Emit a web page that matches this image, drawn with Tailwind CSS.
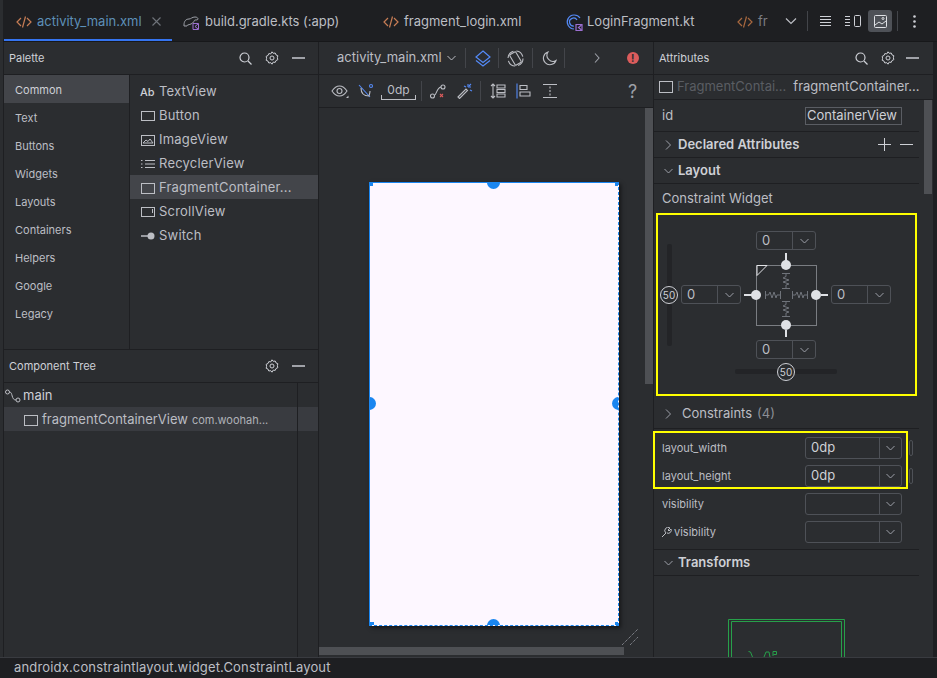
<!DOCTYPE html>
<html lang="en">
<head>
    <meta charset="UTF-8">
    <title>activity_main.xml</title>
    <script src="https://cdn.jsdelivr.net/npm/@tailwindcss/browser@4"></script>
</head>
<body class="bg-[#1e1f22]">
<div class="w-[937px] h-[678px] overflow-hidden flex flex-col bg-[#1e1f22] font-['Inter',sans-serif] text-[13px] text-[#bcbec4] relative">

    <!-- Tabs -->
    <div class="h-[42px] flex items-stretch pl-[4px] border-b border-[#17181a] shrink-0">
        <div class="w-[168px] flex items-center pl-[12px] pt-[4px] gap-[5px] border-b-2 border-[#3574f0]">
            <svg width="16" height="16" viewBox="0 0 16 16" fill="none" stroke="#c77d55" stroke-width="1.2"><path d="M5 4 1 8l4 4M11 4l4 4-4 4M9.500 2.500l-3 11"/></svg>
            <span class="text-[#5d8fb8]">activity_main.xml</span>
            <svg class="ml-[5px]" width="9" height="9" viewBox="0 0 9 9" stroke="#6f737a" stroke-width="1.100"><path d="M.5.5l8 8M8.500.5l-8 8"/></svg>
        </div>
        <div class="w-[196px] flex items-center pl-[11px] pt-[2px] gap-[6px]">
            <svg width="16" height="16" viewBox="0 0 16 16" fill="none" stroke="#9da0a8" stroke-width="1"><path d="M1 11c0-4 2-6 5-6 2 0 3-2 6-2 2 0 3 1 3 2s-2 1-3 1-1 3-4 4-4 1-4 2H1z"/><path d="M10 9.500h5.500v6H10z" stroke="#9b6fd1"/><path d="M15 10l-3 2.500 3 2.500" stroke="#9b6fd1"/></svg>
            <span>build.gradle.kts (:app)</span>
        </div>
        <div class="w-[181px] flex items-center pl-[15px] pt-[2px] gap-[5px]">
            <svg width="16" height="16" viewBox="0 0 16 16" fill="none" stroke="#c77d55" stroke-width="1.2"><path d="M5 4 1 8l4 4M11 4l4 4-4 4M9.500 2.500l-3 11"/></svg>
            <span>fragment_login.xml</span>
        </div>
        <div class="w-[182px] flex items-center pl-[16px] pt-[2px] gap-[2px]">
            <svg width="18" height="18" viewBox="0 0 18 18" fill="none" stroke="#548af7" stroke-width="1.2"><path d="M15 5A7 7 0 1 0 9 16"/><path d="M12 7a4 4 0 1 0-3 6"/><path d="M11 11.500h6v6h-6z" stroke="#9b6fd1"/><path d="M16.500 12l-3 2.500 3 2.500" stroke="#9b6fd1"/></svg>
            <span class="ml-[2px]">LoginFragment.kt</span>
        </div>
        <div class="w-[50px] flex items-center pl-[6px] pt-[2px] gap-[5px] overflow-hidden">
            <svg class="shrink-0" width="16" height="16" viewBox="0 0 16 16" fill="none" stroke="#a8683f" stroke-width="1.200"><path d="M5 4 1 8l4 4M11 4l4 4-4 4M9.500 2.500l-3 11"/></svg>
            <span class="text-[#7b7d82]">fr</span>
        </div>
        <div class="flex-1 flex items-center pt-[1px]">
            <svg class="ml-[4px]" width="12" height="8" viewBox="0 0 12 8" fill="none" stroke="#bcbec4" stroke-width="1.200"><path d="M1 1.500 6 6.500l5-5"/></svg>
            <div class="w-px h-[20px] bg-[#43454a] ml-[10px]"></div>
            <svg class="ml-[12px]" width="11" height="11" viewBox="0 0 11 11" stroke="#ced0d6"><path d="M0 .5h11M0 3.500h11M0 6.500h11M0 9.500h11"/></svg>
            <svg class="ml-[14px]" width="16" height="12" viewBox="0 0 16 12" fill="none" stroke="#ced0d6"><path d="M0 1.500h5M0 4.500h5M0 7.500h5M0 10.500h5"/><rect x="9.500" y=".5" width="6" height="11" rx="1"/></svg>
            <div class="ml-[7px] w-[24px] h-[22px] rounded-[3px] bg-[#4e5157] flex items-center justify-center">
                <svg width="13" height="13" viewBox="0 0 13 13" fill="none" stroke="#dfe1e5"><rect x=".5" y=".5" width="12" height="12" rx="1"/><path d="M1 10l4-3 3 2 4-3"/><circle cx="9" cy="3.500" r="1"/></svg>
            </div>
            <div class="w-px h-[20px] bg-[#43454a] ml-[5px]"></div>
            <svg class="ml-[15px]" width="3" height="13" viewBox="0 0 3 13" fill="#ced0d6"><circle cx="1.500" cy="1.500" r="1.300"/><circle cx="1.500" cy="6.500" r="1.300"/><circle cx="1.500" cy="11.500" r="1.300"/></svg>
        </div>
    </div>

    <!-- Main -->
    <div class="h-[615px] flex shrink-0 pl-[4px] pr-[4px] bg-[#1e1f22]">

        <!-- Left column -->
        <div class="w-[315px] flex flex-col bg-[#2b2d30] border-r border-[#1e1f22] shrink-0">
            <div class="h-[33px] flex items-center pl-[5px] pr-[13px] border-b border-[#1e1f22] text-[11px] shrink-0">
                <span class="text-[#ced0d6]">Palette</span>
                <svg class="ml-auto" width="13" height="13" viewBox="0 0 13 13" fill="none" stroke="#ced0d6" stroke-width="1.200"><circle cx="5.500" cy="5.500" r="4.500"/><path d="M9 9l3.500 3.500"/></svg>
                <svg class="ml-[13px]" width="14" height="14" viewBox="0 0 14 14" fill="none" stroke="#ced0d6"><path d="M7 .8l1.200 1.500 2-.3.800 1.900 1.800.8-.4 2 .4 2-1.800.8-.8 1.900-2-.3L7 13.200l-1.200-1.500-2 .3-.8-1.900-1.800-.8.400-2-.4-2 1.800-.8.800-1.900 2 .3z"/><circle cx="7" cy="7" r="2"/></svg>
                <div class="ml-[13px] w-[13px] h-[2px] bg-[#a0a2a8]"></div>
            </div>
            <div class="h-[275px] flex border-b border-[#1e1f22] shrink-0">
                <div class="w-[126px] border-r border-[#1e1f22] text-[11px] shrink-0">
                    <div class="h-[28px] pl-[11px] pt-[2px] flex items-center bg-[#43454a] text-[#ced0d6]">Common</div>
                    <div class="h-[28px] pl-[11px] pt-[2px] flex items-center">Text</div>
                    <div class="h-[28px] pl-[11px] pt-[2px] flex items-center">Buttons</div>
                    <div class="h-[28px] pl-[11px] pt-[2px] flex items-center">Widgets</div>
                    <div class="h-[28px] pl-[11px] pt-[2px] flex items-center">Layouts</div>
                    <div class="h-[28px] pl-[11px] pt-[2px] flex items-center">Containers</div>
                    <div class="h-[28px] pl-[11px] pt-[2px] flex items-center">Helpers</div>
                    <div class="h-[28px] pl-[11px] pt-[2px] flex items-center">Google</div>
                    <div class="h-[28px] pl-[11px] pt-[2px] flex items-center">Legacy</div>
                </div>
                <div class="flex-1 pt-[4px] tracking-[0.2px]">
                    <div class="h-[24px] flex items-center pl-[10px] pt-[2px] gap-[4px]"><span class="w-[15px] text-[11px] font-medium text-[#ced0d6] tracking-normal">Ab</span><span>TextView</span></div>
                    <div class="h-[24px] flex items-center pl-[11px] pt-[2px] gap-[4px]"><svg width="14" height="10" viewBox="0 0 14 10" fill="none" stroke="#bcbec4"><rect x=".5" y=".5" width="13" height="9"/></svg><span>Button</span></div>
                    <div class="h-[24px] flex items-center pl-[11px] pt-[2px] gap-[4px]"><svg width="14" height="11" viewBox="0 0 14 11" fill="none" stroke="#bcbec4"><rect x=".5" y=".5" width="13" height="10"/><path d="M2 8l3-3 2 1.500L9 4l3 4z"/></svg><span>ImageView</span></div>
                    <div class="h-[24px] flex items-center pl-[11px] pt-[2px] gap-[4px]"><svg width="14" height="10" viewBox="0 0 14 10" stroke="#bcbec4"><path d="M0 1.500h1.500M4 1.500h10M0 5h1.500M4 5h10M0 8.500h1.500M4 8.500h10"/></svg><span>RecyclerView</span></div>
                    <div class="h-[24px] flex items-center pl-[11px] pt-[2px] gap-[4px] bg-[#43454a]"><svg width="14" height="11" viewBox="0 0 14 11" fill="none" stroke="#bcbec4"><rect x=".5" y=".5" width="13" height="10"/></svg><span>FragmentContainer...</span></div>
                    <div class="h-[24px] flex items-center pl-[11px] pt-[2px] gap-[4px]"><svg width="14" height="10" viewBox="0 0 14 10" fill="none" stroke="#bcbec4"><rect x=".5" y=".5" width="13" height="9"/><path d="M11.500 2v4"/></svg><span>ScrollView</span></div>
                    <div class="h-[24px] flex items-center pl-[11px] pt-[2px] gap-[4px]"><svg width="14" height="8" viewBox="0 0 14 8"><path d="M0 4h8" stroke="#bcbec4" stroke-width="1.500"/><circle cx="10" cy="4" r="3.500" fill="#bcbec4"/></svg><span>Switch</span></div>
                </div>
            </div>
            <div class="h-[33px] flex items-center pl-[5px] pr-[13px] border-b border-[#1e1f22] text-[11px] shrink-0">
                <span class="text-[#ced0d6]">Component Tree</span>
                <svg class="ml-auto" width="14" height="14" viewBox="0 0 14 14" fill="none" stroke="#ced0d6"><path d="M7 .8l1.200 1.500 2-.3.800 1.900 1.800.8-.4 2 .4 2-1.800.8-.8 1.900-2-.3L7 13.200l-1.200-1.500-2 .3-.8-1.900-1.800-.8.400-2-.4-2 1.800-.8.800-1.900 2 .3z"/><circle cx="7" cy="7" r="2"/></svg>
                <div class="ml-[13px] w-[13px] h-[2px] bg-[#a0a2a8]"></div>
            </div>
            <div class="flex-1 flex">
                <div class="w-[294px] border-r border-[#1e1f22]">
                    <div class="h-[24px] flex items-center gap-[2px] pl-[1px] pt-[2px]">
                        <svg width="16" height="14" viewBox="0 0 16 14" fill="none" stroke="#bcbec4"><circle cx="2.500" cy="3" r="2"/><circle cx="13" cy="11" r="2"/><path d="M4.500 3C8 3 6 11 11 11"/></svg>
                        <span class="text-[#ced0d6]">main</span>
                    </div>
                    <div class="h-[24px] flex items-center pl-[20px] pt-[2px] gap-[4px] bg-[#393b40]">
                        <svg width="14" height="11" viewBox="0 0 14 11" fill="none" stroke="#bcbec4"><rect x=".5" y=".5" width="13" height="10"/></svg>
                        <span>fragmentContainerView</span>
                        <span class="text-[11px] text-[#b0b2b8]">com.woohah...</span>
                    </div>
                </div>
                <div class="flex-1 pt-[24px]"><div class="h-[24px] bg-[#393b40]"></div></div>
            </div>
        </div>

        <!-- Center column -->
        <div class="w-[335px] flex flex-col bg-[#2b2d30] border-r border-[#1e1f22] shrink-0">
            <div class="h-[33px] flex items-center border-b border-[#1e1f22] shrink-0">
                <span class="ml-[18px]">activity_main.xml</span>
                <svg class="ml-[5px]" width="9" height="6" viewBox="0 0 9 6" fill="none" stroke="#bcbec4"><path d="M.5 1l4 4 4-4"/></svg>
                <div class="w-px h-[20px] bg-[#43454a] ml-[9px]"></div>
                <svg class="ml-[9px]" width="16" height="17" viewBox="0 0 16 17" fill="none" stroke="#548af7" stroke-width="1.200"><path d="M8 1 15 7l-7 5.500L1 7z"/><path d="M1 10.500 8 16l7-5.500"/></svg>
                <div class="w-px h-[20px] bg-[#43454a] ml-[7px]"></div>
                <svg class="ml-[8px]" width="17" height="17" viewBox="0 0 17 17" fill="none" stroke="#bcbec4" stroke-width="1.100"><circle cx="8.500" cy="8.500" r="7.500" stroke-dasharray="9 3"/><rect x="5" y="2.500" width="7" height="12" rx="1" transform="rotate(-30 8.500 8.500)"/></svg>
                <div class="w-px h-[20px] bg-[#43454a] ml-[8px]"></div>
                <svg class="ml-[9px]" width="15" height="15" viewBox="0 0 15 15" fill="none" stroke="#bcbec4" stroke-width="1.100"><path d="M6 1a6.500 6.500 0 1 0 8 8.500A6 6 0 0 1 6 1z"/></svg>
                <div class="w-px h-[20px] bg-[#43454a] ml-[7px]"></div>
                <svg class="ml-[29px]" width="6" height="10" viewBox="0 0 6 10" fill="none" stroke="#9da0a8" stroke-width="1.100"><path d="M1 .5 5 5 1 9.500"/></svg>
                <div class="ml-[27px] w-[12px] h-[12px] rounded-full bg-[#db5c5c] text-[#2b2d30] text-[10px] font-bold leading-[12px] text-center">!</div>
            </div>
            <div class="h-[33px] flex items-center border-b border-[#1e1f22] shrink-0">
                <svg class="ml-[12px]" width="18" height="15" viewBox="0 0 18 15" fill="none" stroke="#bcbec4" stroke-width="1.100"><path d="M1 7c2-3 5-5 7.500-5S14 4 16 7c-2 3-5 5-7.500 5S3 10 1 7z"/><circle cx="8.500" cy="7" r="2.500"/><path d="M15 14l2.500 0 0-2.500z" fill="#bcbec4" stroke="none"/></svg>
                <svg class="ml-[9px]" width="16" height="16" viewBox="0 0 16 16" fill="none" stroke="#bcbec4" stroke-width="1.100"><path d="M1 2l11 12" stroke="#548af7"/><path d="M3 5c0 5 3 8 8 8 .5-2 1-3 1-5"/><circle cx="13" cy="3" r="1.500" stroke="#548af7"/></svg>
                <div class="ml-[7px] w-[35px] h-[17px] relative text-center text-[12px] leading-[13px]">0dp<div class="absolute bottom-0 inset-x-0 h-[5px] border-x border-b border-[#bcbec4]"></div></div>
                <div class="w-px h-[20px] bg-[#43454a] ml-[5px]"></div>
                <svg class="ml-[8px]" width="16" height="15" viewBox="0 0 16 15" fill="none" stroke="#bcbec4" stroke-width="1.100"><circle cx="2.500" cy="12" r="2"/><circle cx="13" cy="3" r="2"/><path d="M4.500 11c2 0 2-7 6.500-8"/><path d="M10 10l3 3M13 10l-3 3" stroke="#db5c5c"/></svg>
                <svg class="ml-[11px]" width="16" height="16" viewBox="0 0 16 16" fill="none" stroke="#bcbec4" stroke-width="1.100"><path d="M1 14 9 6l1.500 1.500-8 8z"/><path d="M11 1v3M14 4h-3M14 1l-2 2M15 8l-2-1M7 3l2 1" stroke="#548af7"/></svg>
                <div class="w-px h-[20px] bg-[#43454a] ml-[7px]"></div>
                <svg class="ml-[9px]" width="16" height="16" viewBox="0 0 16 16" fill="none" stroke="#bcbec4" stroke-width="1.100"><path d="M3 1v14M1 3l2-2 2 2M1 13l2 2 2-2"/><path d="M7 2h8v3H7zM7 6.500h8v3H7zM7 11h8v3H7z"/></svg>
                <svg class="ml-[10px]" width="16" height="16" viewBox="0 0 16 16" fill="none"><path d="M1 .5v15" stroke="#548af7" stroke-width="1.100"/><path d="M4 2.500h7v4H4zM4 9h10v4H4z" stroke="#bcbec4" stroke-width="1.100"/></svg>
                <svg class="ml-[11px]" width="15" height="16" viewBox="0 0 15 16" fill="none" stroke="#bcbec4" stroke-width="1.100"><path d="M0 1.500h14M0 14.500h14M7 3.500v2M7 7v2M7 10.500v2"/></svg>
                <span class="ml-[70px] pt-[2px] text-[#9da0a8] text-[18px] leading-none">?</span>
            </div>
            <!-- Design surface -->
            <div class="flex-1 relative overflow-hidden">
                <div class="absolute left-[50px] top-[74px] w-[250px] h-[444px] overflow-hidden bg-[#fdf7ff] border border-[#1a86f0] [border-right-style:dashed] [border-bottom-style:dashed] shadow-[2px_2px_4px_rgba(0,0,0,0.5)]">
                    <div class="absolute left-[117px] top-[-7px] w-[13px] h-[13px] rounded-full bg-[#1a86f0]"></div>
                    <div class="absolute left-[-7px] top-[214px] w-[13px] h-[13px] rounded-full bg-[#1a86f0]"></div>
                    <div class="absolute right-[-7px] top-[214px] w-[13px] h-[13px] rounded-full bg-[#1a86f0]"></div>
                    <div class="absolute left-[117px] bottom-[-7px] w-[13px] h-[13px] rounded-full bg-[#1a86f0]"></div>
                    <div class="absolute left-0 top-0 w-[3px] h-[3px] bg-[#1a86f0]"></div>
                    <div class="absolute right-0 top-0 w-[3px] h-[3px] bg-[#1a86f0]"></div>
                    <div class="absolute left-0 bottom-0 w-[4px] h-[3px] bg-[#1a86f0]"></div>
                    <div class="absolute right-0 bottom-0 w-[3px] h-[3px] bg-[#1a86f0]"></div>
                </div>
                <div class="absolute right-0 top-0 w-[8px] h-[276px] bg-[#4e5054]"></div>
                <div class="absolute left-0 bottom-[2px] w-[305px] h-[8px] bg-[#4e5054]"></div>
                <svg class="absolute right-[14px] bottom-[11px]" width="18" height="18" viewBox="0 0 18 18" stroke="#9da0a8" stroke-dasharray="1 1"><path d="M1 17 17 1M9 17l8-8"/></svg>
            </div>
        </div>

        <!-- Attributes -->
        <div class="flex-1 flex flex-col bg-[#2b2d30] relative overflow-visible">
            <div class="h-[33px] flex items-center pl-[5px] pr-[14px] border-b border-[#1e1f22] text-[11px] shrink-0">
                <span class="text-[#ced0d6]">Attributes</span>
                <svg class="ml-auto" width="13" height="13" viewBox="0 0 13 13" fill="none" stroke="#ced0d6" stroke-width="1.200"><circle cx="5.500" cy="5.500" r="4.500"/><path d="M9 9l3.500 3.500"/></svg>
                <svg class="ml-[13px]" width="14" height="14" viewBox="0 0 14 14" fill="none" stroke="#ced0d6"><path d="M7 .8l1.200 1.500 2-.3.800 1.900 1.800.8-.4 2 .4 2-1.800.8-.8 1.900-2-.3L7 13.200l-1.200-1.500-2 .3-.8-1.900-1.800-.8.400-2-.4-2 1.800-.8.800-1.900 2 .3z"/><circle cx="7" cy="7" r="2"/></svg>
                <div class="ml-[11px] w-[13px] h-[2px] bg-[#a0a2a8]"></div>
            </div>
            <div class="h-[25px] flex items-center pl-[5px] border-b border-[#1e1f22] shrink-0">
                <svg width="14" height="12" viewBox="0 0 14 12" fill="none" stroke="#bcbec4"><rect x=".5" y=".5" width="13" height="11"/></svg>
                <span class="ml-[4px] text-[#5a5d63]">FragmentContai...</span>
                <span class="ml-[7px]">fragmentContainer...</span>
            </div>
            <div class="w-[265px]">
                <div class="h-[32px] flex items-center pl-[8px] border-b border-[#1e1f22]">
                    <span class="w-[143px]">id</span>
                    <div class="w-[97px] h-[18px] border border-[#5a5d63] overflow-hidden flex items-center justify-end pr-[4px] text-[#ced0d6]">ContainerView</div>
                </div>
                <div class="h-[26px] flex items-center pl-[11px] border-b border-[#1e1f22]">
                    <svg width="7" height="10" viewBox="0 0 7 10" fill="none" stroke="#9da0a8"><path d="M1 .5 5.500 5 1 9.500"/></svg>
                    <span class="ml-[6px] font-semibold text-[#ced0d6]">Declared Attributes</span>
                    <svg class="ml-auto" width="13" height="13" viewBox="0 0 13 13" stroke="#ced0d6"><path d="M6.500 0v13M0 6.500h13"/></svg>
                    <div class="ml-[9px] mr-[6px] w-[13px] h-px bg-[#ced0d6]"></div>
                </div>
                <div class="h-[26px] flex items-center pl-[10px] border-b border-[#1e1f22]">
                    <svg width="9" height="6" viewBox="0 0 9 6" fill="none" stroke="#9da0a8"><path d="M.5 1l4 4 4-4"/></svg>
                    <span class="ml-[5px] font-semibold text-[#ced0d6]">Layout</span>
                </div>
                <div class="h-[29px] flex items-center pl-[8px]">Constraint Widget</div>

                <!-- Constraint widget (drawn on its own canvas) -->
                <div class="relative h-[183px] ml-[2px] w-[261px] border-2 border-[#ffff00]">
                    <div class="absolute left-[9px] top-[29px] w-[5px] h-[102px] bg-[#232427] rounded-[2px]"></div>
                    <div class="absolute left-[77px] top-[154px] w-[102px] h-[5px] bg-[#232427] rounded-[2px]"></div>
                    <svg class="absolute left-0 top-0" width="257" height="179" viewBox="658 215 257 179" fill="none">
                        <rect x="756.500" y="265.500" width="60" height="60" stroke="#7a7d82"/>
                        <path d="M757 275.500v-10h10z" stroke="#e4e5e8"/>
                        <g stroke="#6f737a">
                            <path d="M782 273.500h8M786 273.500v3l-3 1.500 6 2-6 2 6 2-3 1v3M782 288.500h8"/>
                            <path d="M782 301.500h8M786 301.500v3l-3 1.500 6 2-6 2 6 2-3 1v3M782 316.500h8"/>
                            <path d="M765.500 291v8M765.500 295h3l1.500-3 2 6 2-6 2 6 1-3h3M780.500 291v8"/>
                            <path d="M792.500 291v8M792.500 295h3l1.500-3 2 6 2-6 2 6 1-3h3M807.500 291v8"/>
                        </g>
                        <g stroke="#dfe1e5" stroke-width="2">
                            <path d="M786 253v8M786 330v7M744 295h8M821 295h7"/>
                        </g>
                        <g fill="#dfe1e5">
                            <circle cx="786" cy="265" r="5"/>
                            <circle cx="756" cy="295" r="5"/>
                            <circle cx="816" cy="295" r="5"/>
                            <circle cx="786" cy="325" r="5"/>
                        </g>
                    </svg>
                    <div class="absolute left-[2px] top-[71px] w-[18px] h-[18px] rounded-full border border-[#ced0d6] bg-[#2b2d30] text-[10px] leading-[17px] text-center text-[#ced0d6]">50</div>
                    <div class="absolute left-[119px] top-[148px] w-[18px] h-[18px] rounded-full border border-[#ced0d6] bg-[#2b2d30] text-[10px] leading-[17px] text-center text-[#ced0d6]">50</div>
                    <!-- dropdowns -->
                    <div class="absolute left-[98px] top-[16px] w-[60px] h-[19px] border border-[#4e5157] rounded-[3px] flex items-center pl-[5px]">0<div class="ml-auto w-[23px] h-full border-l border-[#4e5157] flex items-center justify-center"><svg width="9" height="6" viewBox="0 0 9 6" fill="none" stroke="#9da0a8"><path d="M.5 1l4 4 4-4"/></svg></div></div>
                    <div class="absolute left-[23px] top-[70px] w-[60px] h-[19px] border border-[#4e5157] rounded-[3px] flex items-center pl-[5px]">0<div class="ml-auto w-[23px] h-full border-l border-[#4e5157] flex items-center justify-center"><svg width="9" height="6" viewBox="0 0 9 6" fill="none" stroke="#9da0a8"><path d="M.5 1l4 4 4-4"/></svg></div></div>
                    <div class="absolute left-[173px] top-[70px] w-[60px] h-[19px] border border-[#4e5157] rounded-[3px] flex items-center pl-[5px]">0<div class="ml-auto w-[23px] h-full border-l border-[#4e5157] flex items-center justify-center"><svg width="9" height="6" viewBox="0 0 9 6" fill="none" stroke="#9da0a8"><path d="M.5 1l4 4 4-4"/></svg></div></div>
                    <div class="absolute left-[98px] top-[125px] w-[60px] h-[19px] border border-[#4e5157] rounded-[3px] flex items-center pl-[5px]">0<div class="ml-auto w-[23px] h-full border-l border-[#4e5157] flex items-center justify-center"><svg width="9" height="6" viewBox="0 0 9 6" fill="none" stroke="#9da0a8"><path d="M.5 1l4 4 4-4"/></svg></div></div>
                </div>

                <div class="h-[33px] flex items-center pl-[11px] pt-[3px] border-b border-[#1e1f22]">
                    <svg width="7" height="10" viewBox="0 0 7 10" fill="none" stroke="#9da0a8"><path d="M1 .5 5.500 5 1 9.500"/></svg>
                    <span class="ml-[10px]">Constraints</span>
                    <span class="ml-[5px] text-[#8c8f96]">(4)</span>
                </div>
                <div class="pt-[5px] text-[11px]">
                    <div class="h-[28px] flex items-center pl-[8px]"><span class="w-[143px]">layout_width</span><div class="w-[97px] h-[22px] border border-[#4e5157] rounded-[3px] flex items-center pl-[5px] text-[13px] text-[#ced0d6]">0dp<div class="ml-auto w-[22px] h-full border-l border-[#4e5157] flex items-center justify-center"><svg width="9" height="6" viewBox="0 0 9 6" fill="none" stroke="#9da0a8"><path d="M.5 1l4 4 4-4"/></svg></div></div></div>
                    <div class="h-[28px] flex items-center pl-[8px]"><span class="w-[143px]">layout_height</span><div class="w-[97px] h-[22px] border border-[#4e5157] rounded-[3px] flex items-center pl-[5px] text-[13px] text-[#ced0d6]">0dp<div class="ml-auto w-[22px] h-full border-l border-[#4e5157] flex items-center justify-center"><svg width="9" height="6" viewBox="0 0 9 6" fill="none" stroke="#9da0a8"><path d="M.5 1l4 4 4-4"/></svg></div></div></div>
                    <div class="h-[28px] flex items-center pl-[8px]"><span class="w-[143px]">visibility</span><div class="w-[97px] h-[22px] border border-[#4e5157] rounded-[3px] flex items-center"><div class="ml-auto w-[22px] h-full border-l border-[#4e5157] flex items-center justify-center"><svg width="9" height="6" viewBox="0 0 9 6" fill="none" stroke="#9da0a8"><path d="M.5 1l4 4 4-4"/></svg></div></div></div>
                    <div class="h-[28px] flex items-center pl-[7px]"><svg width="11" height="11" viewBox="0 0 11 11" fill="none" stroke="#bcbec4"><path d="M1 10 5 6a3 3 0 0 1 4-5L7 3l1 1 2-2a3 3 0 0 1-4 4"/></svg><span class="ml-[2px] w-[131px]">visibility</span><div class="w-[97px] h-[22px] border border-[#4e5157] rounded-[3px] flex items-center"><div class="ml-auto w-[22px] h-full border-l border-[#4e5157] flex items-center justify-center"><svg width="9" height="6" viewBox="0 0 9 6" fill="none" stroke="#9da0a8"><path d="M.5 1l4 4 4-4"/></svg></div></div></div>
                </div>
                <div class="h-[27px] mt-[3px] flex items-center pl-[10px] border-y border-[#1e1f22]">
                    <svg width="9" height="6" viewBox="0 0 9 6" fill="none" stroke="#9da0a8"><path d="M.5 1l4 4 4-4"/></svg>
                    <span class="ml-[5px] font-semibold text-[#ced0d6]">Transforms</span>
                </div>
                <svg class="mt-[43px] ml-[74px]" width="118" height="38" viewBox="728 619 118 38" fill="none" stroke="#27a04a">
                    <path d="M728.500 657v-37.500h116V657M731.500 657v-35.500h110V657"/>
                    <path d="M748.500 651.500l2 .5 2 5M764 657l2-5h3l1 5M773 656v-4.500h3.500v3h-3"/>
                </svg>
            </div>
            <div class="absolute right-[1px] top-[58px] w-[8px] h-[94px] bg-[#4e5054]"></div>
            <!-- highlight over the size rows -->
            <div class="absolute left-[-1px] top-[389px] w-[255px] h-[58px] border-2 border-[#ffff00]"></div>
            <div class="absolute left-[255px] top-[398px] w-[4px] h-[16px] border border-[#4e5157] rounded-[2px]"></div>
            <div class="absolute left-[255px] top-[426px] w-[4px] h-[16px] border border-[#4e5157] rounded-[2px]"></div>
        </div>
    </div>

    <!-- Status bar -->
    <div class="flex-1 flex items-center pl-[14px] border-t border-[#393b40] tracking-[0.16px] relative z-10 bg-[#1e1f22]">androidx.constraintlayout.widget.ConstraintLayout</div>
    <div class="absolute left-0 top-0 w-[3px] h-[657px] bg-[#2b2d30]"></div>
</div>
</body>
</html>
